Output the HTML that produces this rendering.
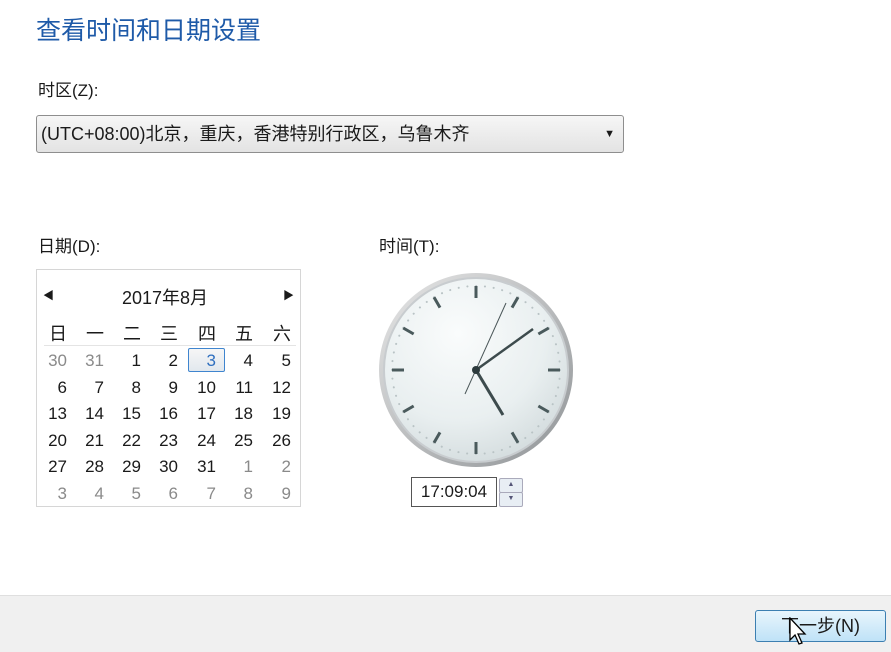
<!DOCTYPE html>
<html><head><meta charset="utf-8"><style>
body{margin:0;width:891px;height:651px;background:#fff;position:relative;overflow:hidden;font-family:"Liberation Sans","Noto Sans CJK SC",sans-serif;color:#1a1a1a}
.a{position:absolute;white-space:nowrap}
.title{left:36px;top:11px;font-size:25px;color:#1e5aa8}
.lbl{font-size:17px}
.dd{left:36px;top:115px;border:1px solid #8e8e8e;border-radius:3px;background:linear-gradient(#f6f6f6,#e3e3e3);font-size:18px;line-height:36px;box-sizing:border-box;padding-left:4px;width:588px;height:38px}
.cal{left:36px;top:269px;width:265px;height:238px;border:1px solid #d6d6d6;box-sizing:border-box}
.n{position:absolute;font-size:17px;text-align:right;width:40px}
.g{color:#8a8a8a}
.bar{left:0;top:595px;width:891px;height:56px;background:#f0f0f0;border-top:1px solid #dfdfdf}
.btn{left:755px;top:610px;width:131px;height:32px;box-sizing:border-box;border:1px solid #3c7fb1;border-radius:3px;background:linear-gradient(#e8f5fc,#bfe2f7);text-align:center;font-size:18px;line-height:30px}
</style></head><body>
<div class="a title">查看时间和日期设置</div>
<div class="a lbl" style="left:38px;top:76px">时区(Z):</div>
<div class="a dd">(UTC+08:00)北京，重庆，香港特别行政区，乌鲁木齐<span style="position:absolute;right:8px;top:0;font-size:11px">▼</span></div>
<div class="a lbl" style="left:38px;top:232px">日期(D):</div>
<div class="a lbl" style="left:379px;top:232px">时间(T):</div>
<div class="a cal"></div>
<div class="a" style="left:43px;top:287px;font-size:11px">◀</div>
<div class="a" style="left:283px;top:287px;font-size:11px">▶</div>
<div class="a" style="left:122px;top:284px;font-size:18px">2017年8月</div>
<div class="a" style="left:44px;top:345px;width:252px;border-top:1px solid #e4e4e4"></div>
<div class="a" style="left:188px;top:348px;width:37px;height:24px;border:1px solid #3f85cf;border-radius:2px;background:linear-gradient(#f6f6f6,#e2e8ee);box-sizing:border-box"></div>
<div id="c"></div>
<script>
var R=[67,104,141,178,216,253,291],Y=[320,350,377,403,430,456,483];
var h=["日","一","二","三","四","五","六"],s="";
h.forEach(function(t,i){s+='<div class="n" style="font-size:18px;left:'+(R[i]-40)+'px;top:'+Y[0]+'px">'+t+'</div>';});
var cur=[30,31];for(var i=1;i<=31;i++)cur.push(i);for(i=1;i<=9;i++)cur.push(i);
for(var k=0;k<42;k++){var r=Math.floor(k/7),c=k%7,g=(k<2||k>=33),col=g?' g':'';var st=k==4?'color:#2f6fbf;':'';
s+='<div class="n'+col+'" style="'+st+'left:'+(R[c]-40)+'px;top:'+(Y[r+1]+1)+'px">'+cur[k]+'</div>';}
document.getElementById('c').innerHTML=s;
</script>
<svg class="a" style="left:376px;top:270px" width="200" height="200" viewBox="-100 -100 200 200">
<defs><radialGradient id="f" cx="40%" cy="30%" r="80%"><stop offset="0" stop-color="#fafcfc"/><stop offset="0.6" stop-color="#e9eff0"/><stop offset="1" stop-color="#cfd8da"/></radialGradient>
<linearGradient id="r" x1="0" y1="0" x2="1" y2="1"><stop offset="0" stop-color="#e8e8e8"/><stop offset="1" stop-color="#8f9396"/></linearGradient></defs>
<circle r="97" fill="url(#r)"/><circle r="93" fill="#c8cccf"/><circle r="91" fill="url(#f)"/>
<circle r="84" fill="none" stroke="#b9c3c5" stroke-width="2" stroke-linecap="round" stroke-dasharray="0.1 8.696"/>
<g stroke="#4a5a5c" stroke-width="3"><line x1="0" y1="-84" x2="0" y2="-72"/><line x1="0" y1="84" x2="0" y2="72"/><line x1="-84" y1="0" x2="-72" y2="0"/><line x1="84" y1="0" x2="72" y2="0"/>
<g transform="rotate(30)"><line x1="0" y1="-84" x2="0" y2="-72"/><line x1="0" y1="84" x2="0" y2="72"/><line x1="-84" y1="0" x2="-72" y2="0"/><line x1="84" y1="0" x2="72" y2="0"/></g>
<g transform="rotate(60)"><line x1="0" y1="-84" x2="0" y2="-72"/><line x1="0" y1="84" x2="0" y2="72"/><line x1="-84" y1="0" x2="-72" y2="0"/><line x1="84" y1="0" x2="72" y2="0"/></g></g>
<line x1="0" y1="0" x2="27" y2="45" stroke="#3d4b4d" stroke-width="3"/>
<line x1="0" y1="0" x2="57" y2="-41" stroke="#3d4b4d" stroke-width="2.5"/>
<line x1="-11" y1="24" x2="30" y2="-67" stroke="#4a5658" stroke-width="1"/>
<circle r="4" fill="#2c3a3c"/>
</svg>
<div class="a" style="left:411px;top:477px;width:86px;height:30px;border:1px solid #555;box-sizing:border-box;font-size:17px;line-height:28px;text-align:center">17:09:04</div>
<div class="a" style="left:499px;top:478px;width:22px;height:13px;border:1px solid #aab;border-radius:2px;background:#e8eef4;font-size:7px;text-align:center;line-height:12px;color:#557">▲</div>
<div class="a" style="left:499px;top:492px;width:22px;height:13px;border:1px solid #aab;border-radius:2px;background:#e8eef4;font-size:7px;text-align:center;line-height:12px;color:#557">▼</div>
<div class="a bar"></div>
<div class="a btn">下一步(N)</div>
<svg class="a" style="left:789px;top:617px" width="22" height="30" viewBox="0 0 22 30"><path d="M1 1 L1 23 L6 18 L10 27 L13 26 L9 17 L16 17 Z" fill="#fff" stroke="#000" stroke-width="1.3"/></svg>
</body></html>
